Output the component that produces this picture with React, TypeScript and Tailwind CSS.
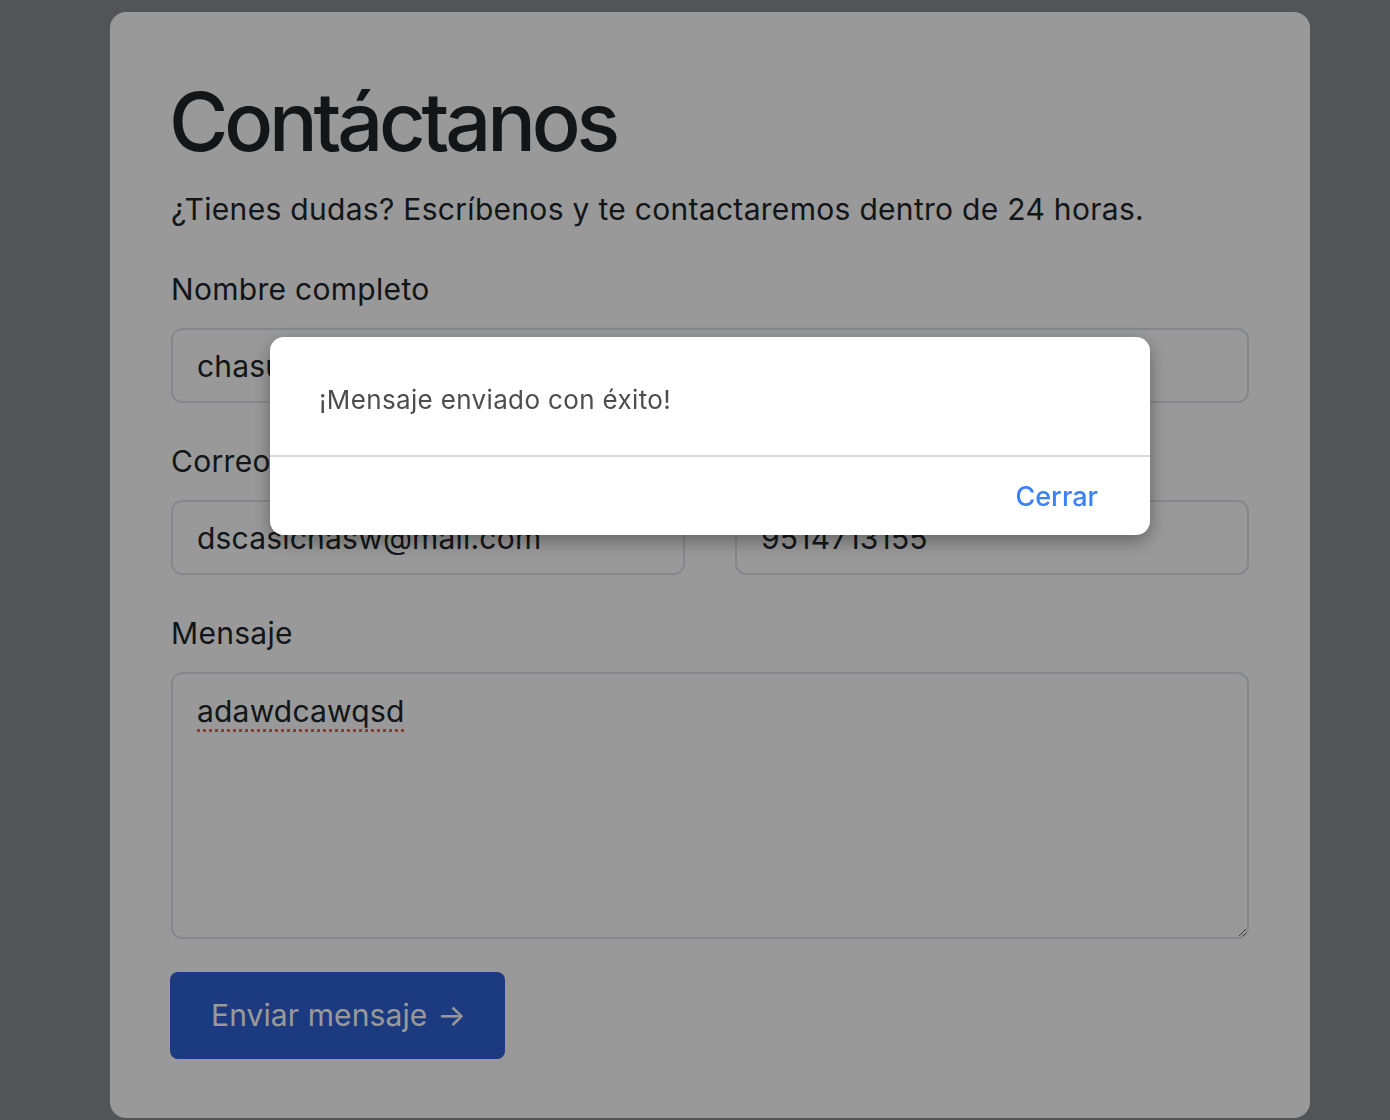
import { useState } from "react";

export default function App() {
  const [name, setName] = useState("chasub");
  const [email, setEmail] = useState("dscasichasw@mail.com");
  const [phone, setPhone] = useState("9514713155");
  const [message, setMessage] = useState("adawdcawqsd");
  const [open, setOpen] = useState(true);

  const fieldClass =
    "block w-full h-[75px] rounded-[11px] border-2 border-[#dee2e6] bg-white px-[24px] text-[30px] tracking-[0.2px] text-[#212529] outline-none";

  return (
    <div className="relative min-h-[1120px] bg-[#8a8c8f] pt-[12px] font-['Inter',sans-serif] tracking-[0.3px] text-[#212529]">
      <div className="ml-[110px] h-[1106px] w-[1200px] rounded-[16px] bg-white px-[61px] pt-[62px]">
        <h1 className="-ml-[2px] text-[81px] font-medium leading-[97px] tracking-[-4.2px]">Contáctanos</h1>
        <p className="mt-[16px] text-[30px] leading-[45px]">
          ¿Tienes dudas? Escríbenos y te contactaremos dentro de 24 horas.
        </p>

        {/* Nombre */}
        <div className="mt-[35px]">
          <label className="block text-[30px] leading-[45px]">Nombre completo</label>
          <input
            className={`mt-[16px] ${fieldClass}`}
            value={name}
            onChange={(e) => setName(e.target.value)}
          />
        </div>

        {/* Correo + Teléfono */}
        <div className="mt-[36px] grid grid-cols-2 gap-[50px]">
          <div>
            <label className="block text-[30px] leading-[45px]">Correo</label>
            <input
              className={`mt-[16px] ${fieldClass}`}
              value={email}
              onChange={(e) => setEmail(e.target.value)}
            />
          </div>
          <div>
            <label className="block text-[30px] leading-[45px]">Teléfono</label>
            <input
              className={`mt-[16px] ${fieldClass}`}
              value={phone}
              onChange={(e) => setPhone(e.target.value)}
            />
          </div>
        </div>

        {/* Mensaje */}
        <div className="mt-[36px]">
          <label className="block text-[30px] leading-[45px]">Mensaje</label>
          <textarea
            className="mt-[16px] block h-[267px] w-full rounded-[11px] border-2 border-[#dee2e6] bg-white px-[24px] pt-[15px] text-[30px] leading-[45px] tracking-[0.2px] text-[#212529] underline decoration-[#e0665a] decoration-dotted decoration-[3px] underline-offset-[7px] outline-none"
            value={message}
            onChange={(e) => setMessage(e.target.value)}
          />
        </div>

        <button className="mt-[33px] -ml-px flex h-[87px] items-center gap-[10px] rounded-[8px] bg-[#2d61d4] pl-[41px] pr-[39px] text-[30px] tracking-[0.1px] text-white">
          Enviar mensaje <span className="text-[30px]">→</span>
        </button>
      </div>

      {open && (
        <div className="fixed inset-0 bg-black/40">
          <div className="absolute left-[270px] top-[337px] w-[880px] overflow-hidden rounded-[14px] bg-white shadow-[0_6px_18px_rgba(0,0,0,0.35)]">
            <div className="flex h-[118px] items-center pl-[49px] pt-[6px] text-[26px] tracking-[0.35px] text-[#4d4d4d]">
              ¡Mensaje enviado con éxito!
            </div>
            <div className="h-[2px] bg-[#d9d9d9]" />
            <div className="flex h-[78px] items-center justify-end pr-[52px] pt-[3px]">
              <button
                className="text-[27px] font-medium tracking-normal text-[#3b82f6]"
                onClick={() => setOpen(false)}
              >
                Cerrar
              </button>
            </div>
          </div>
        </div>
      )}
    </div>
  );
}
